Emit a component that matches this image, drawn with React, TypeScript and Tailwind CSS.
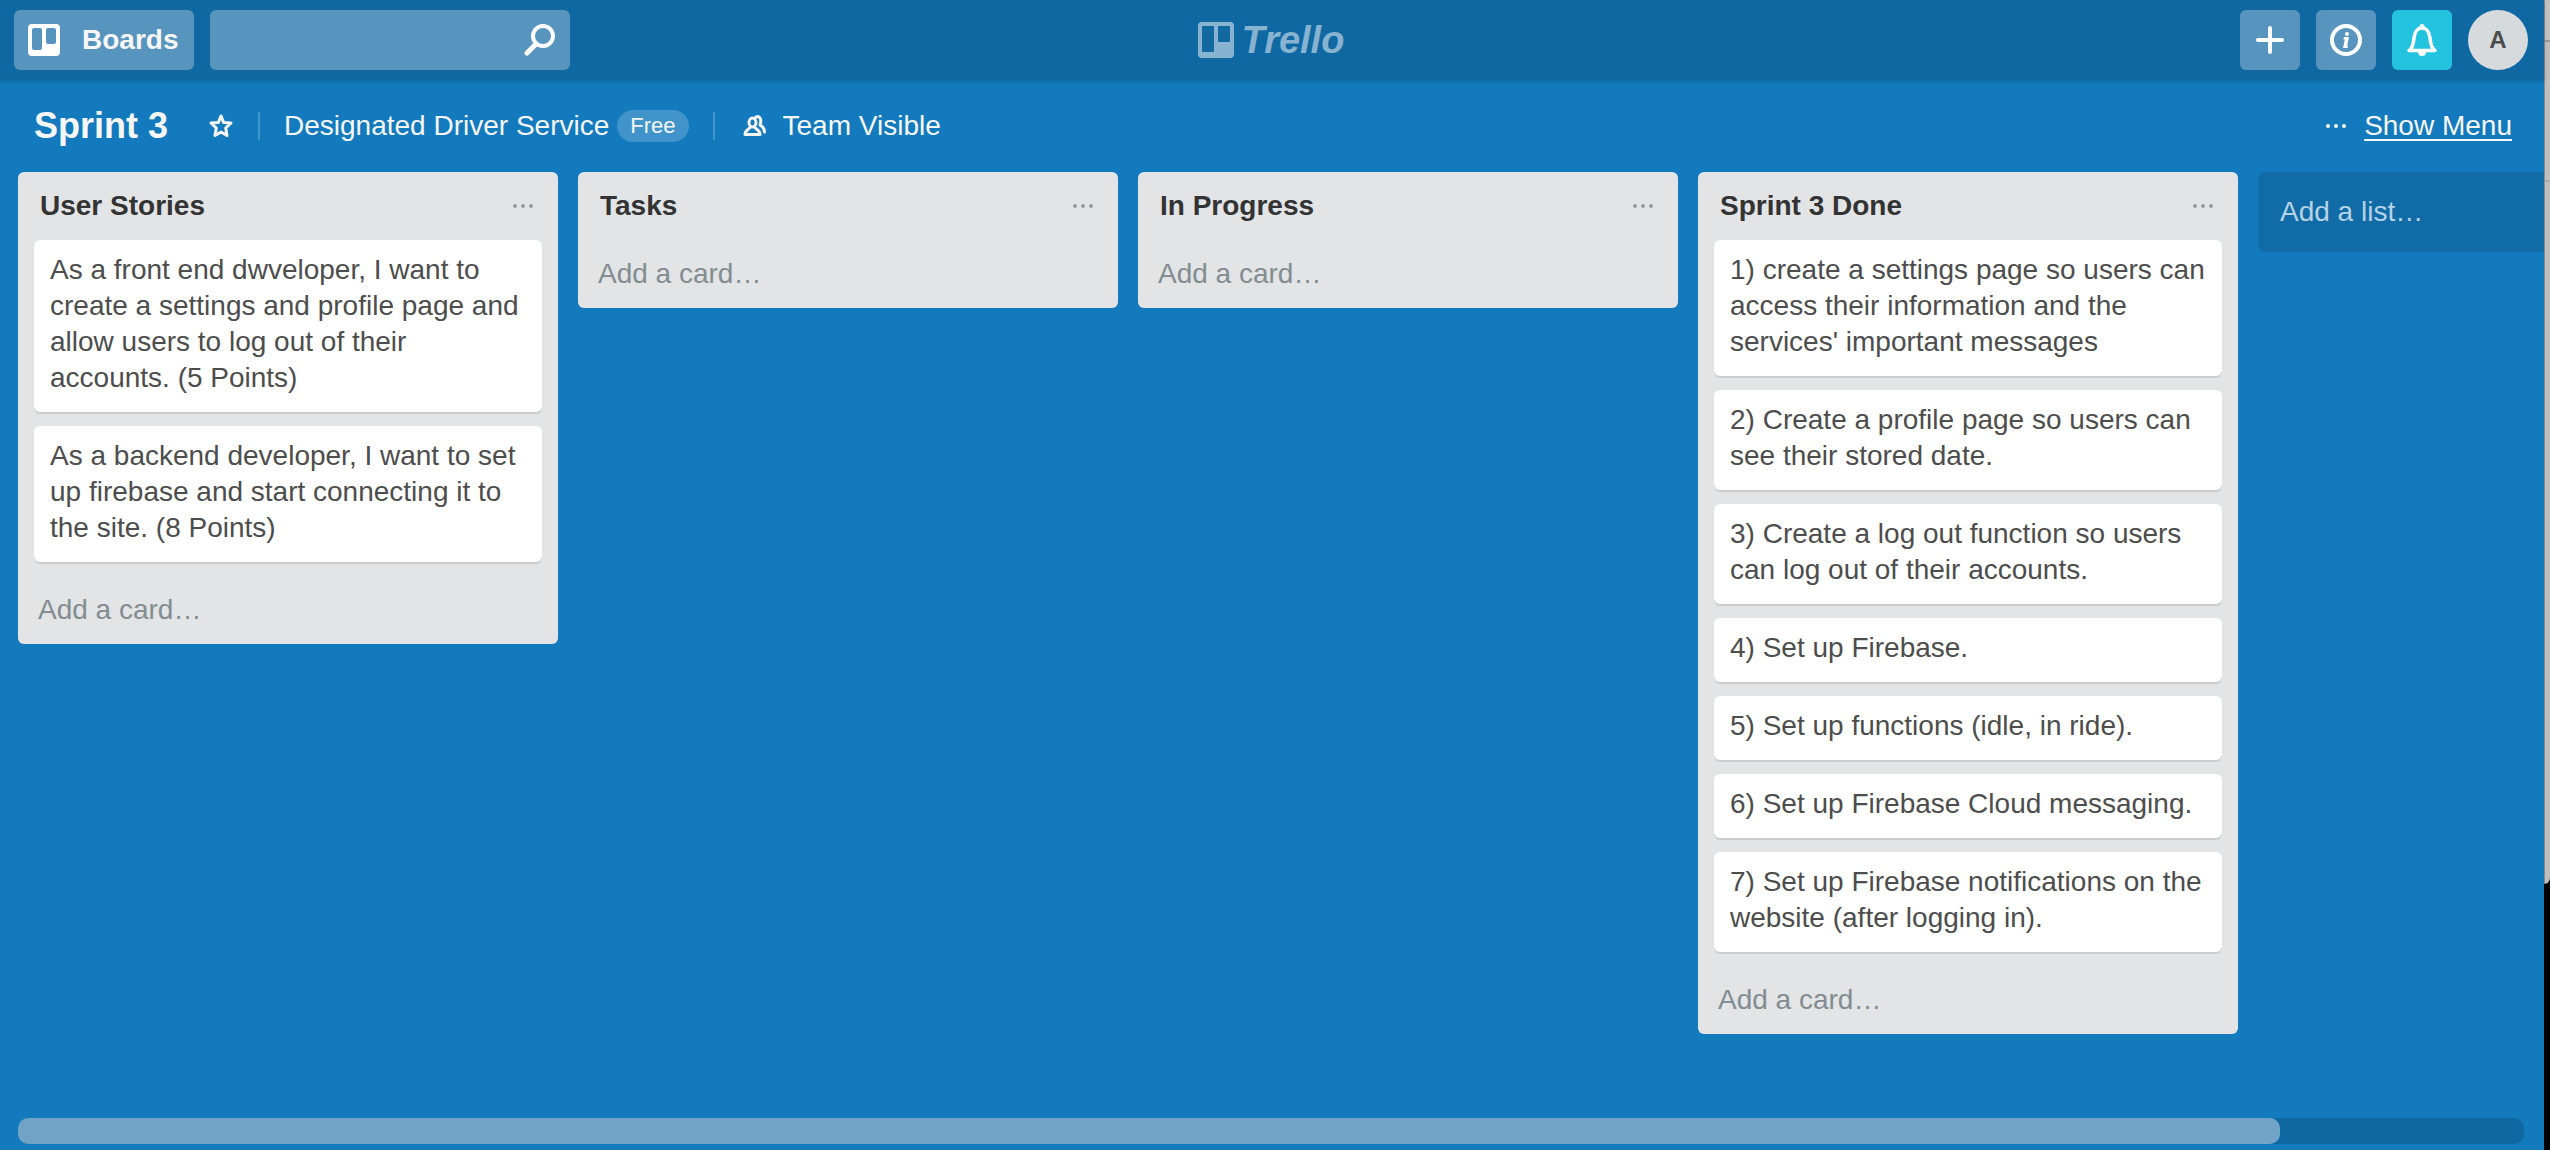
import React from "react";

type BoardList = { title: string; cards: string[] };

const lists: BoardList[] = [
  {
    title: "User Stories",
    cards: [
      "As a front end dwveloper, I want to create a settings and profile page and allow users to log out of their accounts. (5 Points)",
      "As a backend developer, I want to set up firebase and start connecting it to the site. (8 Points)",
    ],
  },
  { title: "Tasks", cards: [] },
  { title: "In Progress", cards: [] },
  {
    title: "Sprint 3 Done",
    cards: [
      "1) create a settings page so users can access their information and the services' important messages",
      "2) Create a profile page so users can see their stored date.",
      "3) Create a log out function so users can log out of their accounts.",
      "4) Set up Firebase.",
      "5) Set up functions (idle, in ride).",
      "6) Set up Firebase Cloud messaging.",
      "7) Set up Firebase notifications on the website (after logging in).",
    ],
  },
];

function BoardsIcon() {
  return (
    <svg width="32" height="32" viewBox="0 0 32 32" aria-hidden="true">
      <path
        fill="#fff"
        fillRule="evenodd"
        d="M4 0h24a4 4 0 0 1 4 4v24a4 4 0 0 1-4 4H4a4 4 0 0 1-4-4V4a4 4 0 0 1 4-4zM6 4a2 2 0 0 0-2 2v18a2 2 0 0 0 2 2h6a2 2 0 0 0 2-2V6a2 2 0 0 0-2-2zM20 4a2 2 0 0 0-2 2v12a2 2 0 0 0 2 2h6a2 2 0 0 0 2-2V6a2 2 0 0 0-2-2z"
      />
    </svg>
  );
}

function LogoMark() {
  return (
    <svg width="36" height="36" viewBox="0 0 36 36" aria-hidden="true">
      <path
        fill="#87b3d1"
        fillRule="evenodd"
        d="M4 0h28a4 4 0 0 1 4 4v28a4 4 0 0 1-4 4H4a4 4 0 0 1-4-4V4a4 4 0 0 1 4-4zM5 4a1 1 0 0 0-1 1v24a1 1 0 0 0 1 1h10a1 1 0 0 0 1-1V5a1 1 0 0 0-1-1zM21 4a1 1 0 0 0-1 1v14a1 1 0 0 0 1 1h10a1 1 0 0 0 1-1V5a1 1 0 0 0-1-1z"
      />
    </svg>
  );
}

function SearchIcon() {
  return (
    <svg width="32" height="32" viewBox="0 0 32 32" fill="none" stroke="#fff" strokeLinecap="round" aria-hidden="true">
      <circle cx="19" cy="12" r="10" strokeWidth="4" />
      <path d="M12 20 3 29" strokeWidth="5" />
    </svg>
  );
}

function PlusIcon() {
  return (
    <svg width="28" height="28" viewBox="0 0 28 28" stroke="#fff" strokeWidth="4" strokeLinecap="round" aria-hidden="true">
      <path d="M14 2v24M2 14h24" />
    </svg>
  );
}

function InfoIcon() {
  return (
    <svg width="32" height="32" viewBox="0 0 32 32" aria-hidden="true">
      <circle cx="16" cy="16" r="14" fill="none" stroke="#fff" strokeWidth="4" />
      <circle cx="17" cy="10" r="2" fill="#fff" />
      <path d="M14 13h5l-1.800 8.600h.8l-.5 2.400h-4.500l1.800-8.600h-1.300z" fill="#fff" />
    </svg>
  );
}

function BellIcon() {
  return (
    <svg width="32" height="32" viewBox="0 0 32 32" aria-hidden="true">
      <path
        d="M3 26.500h26c-3.500-2-4.500-7-5-12.500C23.400 8 20.500 4 16 4s-7.400 4-8 10c-.5 5.500-1.500 10.500-5 12.500z"
        fill="none"
        stroke="#fff"
        strokeWidth="3.500"
        strokeLinejoin="round"
      />
      <circle cx="16" cy="2.500" r="2.500" fill="#fff" />
      <path d="M12 28a4 4 0 0 0 8 0z" fill="#fff" />
    </svg>
  );
}

function StarIcon() {
  return (
    <svg width="26" height="26" viewBox="0 0 26 26" fill="none" stroke="#f6f6f6" strokeWidth="3" strokeLinejoin="round" aria-hidden="true">
      <path d="M13 3l2.600 6.400 7.400.6-5.300 5 1.300 7.500-6-3.500-6 3.500 1.300-7.500L3 10l7.400-.6z" />
    </svg>
  );
}

function TeamIcon() {
  return (
    <svg width="24" height="22" viewBox="0 0 24 22" fill="none" stroke="#f6f6f6" strokeWidth="3" strokeLinecap="round" strokeLinejoin="round" aria-hidden="true">
      <ellipse cx="9.500" cy="7.500" rx="3.500" ry="4.500" />
      <path d="M7.500 12c-.5 2-5 2-5.500 7.500h15C16.500 14 12 14 11.500 12" />
      <path d="M13 2c4-1.500 6 2.500 4 8 2 1.500 4.500 2.500 4.500 7" />
    </svg>
  );
}

function Dots({ className }: { className: string }) {
  return (
    <svg width="20" height="6" viewBox="0 0 20 6" fill="currentColor" className={className} aria-hidden="true">
      <circle cx="2" cy="3" r="2" />
      <circle cx="10" cy="3" r="2" />
      <circle cx="18" cy="3" r="2" />
    </svg>
  );
}

function Header() {
  return (
    <header className="z-10 grid h-20 shrink-0 grid-cols-[1fr_auto_1fr] items-center bg-[#0f68a2] pr-4 pl-[14px] shadow-[0_1px_4px_rgba(0,0,0,0.2)]">
      <div className="flex items-center gap-4">
        <button type="button" className="flex h-[60px] items-center gap-[22px] rounded-md bg-[#5795bf] pr-4 pl-[14px] text-[28px] leading-9 font-bold text-[#f6f6f6]">
          <BoardsIcon />
          Boards
        </button>
        <label className="flex h-[60px] w-[360px] items-center rounded-md bg-[#5795bf] pr-[14px] pl-4">
          <input type="text" aria-label="Search" className="min-w-0 flex-1 bg-transparent text-[28px] text-white outline-none" />
          <SearchIcon />
        </label>
      </div>
      <a href="#" aria-label="Trello" className="flex items-center gap-2 text-[38px] leading-10 font-bold text-[#87b3d1] italic">
        <LogoMark />
        Trello
      </a>
      <div className="flex items-center justify-end gap-4">
        <button type="button" aria-label="Create" className="flex size-[60px] items-center justify-center rounded-md bg-[#5795bf]">
          <PlusIcon />
        </button>
        <button type="button" aria-label="Information" className="flex size-[60px] items-center justify-center rounded-md bg-[#5795bf]">
          <InfoIcon />
        </button>
        <button type="button" aria-label="Notifications" className="flex size-[60px] items-center justify-center rounded-md bg-[#23c2df]">
          <BellIcon />
        </button>
        <button type="button" className="flex size-[60px] items-center justify-center rounded-full bg-[#d6dadc] text-2xl leading-9 font-bold text-[#4d4d4d]">
          A
        </button>
      </div>
    </header>
  );
}

function BoardBar() {
  return (
    <div className="flex h-[92px] shrink-0 items-center pr-8 pl-[34px] text-[28px] leading-9 text-[#f6f6f6]">
      <h1 className="text-4xl leading-9 font-bold">Sprint 3</h1>
      <button type="button" aria-label="Star this board" className="ml-10">
        <StarIcon />
      </button>
      <span className="ml-6 h-7 w-[2px] bg-[#4194ca]" />
      <a href="#" className="ml-6">Designated Driver Service</a>
      <span className="ml-2 flex h-8 items-center rounded-full bg-[#4194ca] px-[13px] text-[22px] leading-8">Free</span>
      <span className="ml-6 h-7 w-[2px] bg-[#4194ca]" />
      <button type="button" className="ml-7 flex items-center gap-4">
        <TeamIcon />
        Team Visible
      </button>
      <button type="button" className="ml-auto flex items-center gap-[18px]">
        <Dots className="text-white" />
        <span className="underline decoration-2 underline-offset-4">Show Menu</span>
      </button>
    </div>
  );
}

function List({ list }: { list: BoardList }) {
  return (
    <section className="w-[540px] shrink-0 rounded-md bg-[#e2e4e6] px-4">
      <div className="flex h-[68px] items-center justify-between pr-[9px] pl-[6px]">
        <h2 className="text-[28px] leading-9 font-bold text-[#333]">{list.title}</h2>
        <button type="button" aria-label={`${list.title} actions`}>
          <Dots className="text-[#999]" />
        </button>
      </div>
      {list.cards.map((card) => (
        <a
          key={card}
          href="#"
          className="mb-[14px] block rounded-md bg-white px-4 pt-3 pb-4 text-[28px] leading-9 text-[#4d4d4d] shadow-[0_2px_0_#ccc]"
        >
          {card}
        </a>
      ))}
      <button type="button" className="block w-full px-1 py-4 text-left text-[28px] leading-9 text-[#838c91]">
        Add a card…
      </button>
    </section>
  );
}

export default function App() {
  return (
    <div className="flex h-screen overflow-hidden bg-black font-['Liberation_Sans',Arial,sans-serif]">
      <div className="flex min-w-0 flex-1 flex-col bg-[#127abd]">
        <Header />
        <BoardBar />
        <main className="flex min-h-0 flex-1 items-start gap-5 overflow-hidden pl-[18px]">
          {lists.map((list) => (
            <List key={list.title} list={list} />
          ))}
          <button type="button" className="h-20 w-[540px] shrink-0 rounded-md bg-[#106ba6] px-[22px] text-left text-[28px] leading-9 text-[#b5d2e6]">
            Add a list…
          </button>
        </main>
        <div className="mr-5 mb-[6px] ml-[18px] h-[26px] shrink-0 rounded-[10px] bg-[#1068a2]">
          <div className="h-full w-[calc(100%-244px)] rounded-[10px] bg-[#71a3c7]" />
        </div>
      </div>
      {/* Edge of the window behind the board */}
      <div className="flex h-[884px] w-[6px] shrink-0 flex-col rounded-br-md border-l border-[#8a8a8a] bg-[#bebebe]">
        <div className="h-10 shrink-0 bg-[#c2c2c2]" />
        <div className="h-[2px] shrink-0 bg-[#999]" />
        <div className="h-[138px] shrink-0" />
        <div className="h-[2px] shrink-0 bg-[#aaa]" />
      </div>
    </div>
  );
}
